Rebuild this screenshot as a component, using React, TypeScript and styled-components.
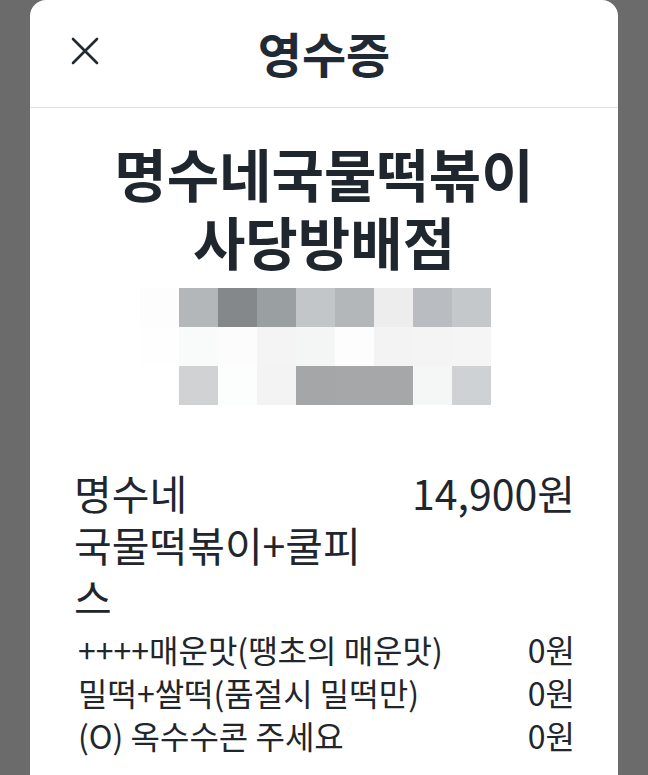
import React from "react";
import styled, { createGlobalStyle } from "styled-components";

const GlobalStyle = createGlobalStyle`
  html, body {
    margin: 0;
    padding: 0;
    background: #6b6b6b;
  }
  body {
    font-family: "Noto Sans CJK KR", "Noto Sans", sans-serif;
    color: #1f262d;
  }
`;

const Page = styled.div`
  display: flex;
  justify-content: center;
  min-height: 775px;
`;

const Card = styled.div`
  width: 588px;
  min-height: 775px;
  background: #ffffff;
  border-radius: 16px 16px 0 0;
  overflow: hidden;
`;

const Header = styled.div`
  display: grid;
  grid-template-columns: 1fr auto 1fr;
  align-items: center;
  height: 108px;
  border-bottom: 1px solid #e2e2e2;
  box-sizing: border-box;
`;

const CloseButton = styled.button`
  justify-self: start;
  margin-left: 40px;
  margin-top: -6px;
  padding: 0;
  border: none;
  background: none;
  display: flex;
  cursor: pointer;
`;

const Title = styled.h1`
  margin: -4px 0 0;
  font-size: 48px;
  font-weight: 700;
  line-height: 1;
  color: #1f2a35;
`;

const StoreName = styled.h2`
  margin: 30px 0 0;
  text-align: center;
  font-size: 57px;
  font-weight: 700;
  line-height: 68px;
  color: #1f262d;
`;

const StoreLine = styled.span`
  display: block;
  height: 68px;
`;

const Mosaic = styled.div`
  display: grid;
  grid-template-columns: repeat(9, 39px);
  grid-auto-rows: 39px;
  margin: 14px 0 0 110px;
`;

const Cell = styled.div<{ $color: string }>`
  background: ${(p) => p.$color};
`;

const Items = styled.div`
  padding: 61px 43px 0 44px;
`;

const ItemRow = styled.div`
  display: flex;
  justify-content: space-between;
  align-items: flex-start;
`;

const ItemName = styled.div`
  width: 320px;
  font-size: 41px;
  line-height: 52px;
  word-break: keep-all;
  overflow-wrap: anywhere;
`;

const ItemPrice = styled.div`
  font-size: 41px;
  line-height: 52px;
  white-space: nowrap;
`;

const Options = styled.div`
  margin-top: 6px;
  padding-left: 4px;
`;

const OptionRow = styled.div`
  display: flex;
  justify-content: space-between;
  font-size: 32px;
  line-height: 43px;
`;

const mosaic = [
  ["#fdfdfd", "#b3b7b9", "#85888b", "#9a9fa2", "#c3c6c8", "#b3b7b9", "#ededed", "#b9bcc0", "#c5c8ca"],
  ["#fefefe", "#f9fafa", "#fcfcfc", "#f4f4f4", "#f4f5f5", "#fdfdfd", "#f3f3f3", "#f4f4f4", "#f5f5f5"],
  ["#ffffff", "#d1d2d3", "#fcfdfd", "#f3f3f3", "#a5a6a7", "#a6a7a8", "#a6a7a8", "#f5f6f6", "#cfd2d5"],
];

const options = [
  { name: "++++매운맛(땡초의 매운맛)", price: "0원" },
  { name: "밀떡+쌀떡(품절시 밀떡만)", price: "0원" },
  { name: "(O) 옥수수콘 주세요", price: "0원" },
];

const CloseIcon = () => (
  <svg width="30" height="28" viewBox="0 0 30 28" fill="none">
    <path d="M3 2 L27 26 M27 2 L3 26" stroke="#222a30" strokeWidth="2.6" strokeLinecap="round" />
  </svg>
);

export default function App() {
  return (
    <>
      <GlobalStyle />
      <Page>
        <Card>
          <Header>
            <CloseButton aria-label="닫기">
              <CloseIcon />
            </CloseButton>
            <Title>영수증</Title>
            <span />
          </Header>
          <StoreName>
            <StoreLine>명수네국물떡볶이</StoreLine>
            <StoreLine>사당방배점</StoreLine>
          </StoreName>
          <Mosaic>
            {mosaic.flat().map((c, i) => (
              <Cell key={i} $color={c} />
            ))}
          </Mosaic>
          <Items>
            <ItemRow>
              <ItemName>{"명수네 국물떡볶이\u2060+\u2060쿨피스"}</ItemName>
              <ItemPrice>14,900원</ItemPrice>
            </ItemRow>
            <Options>
              {options.map((o) => (
                <OptionRow key={o.name}>
                  <span>{o.name}</span>
                  <span>{o.price}</span>
                </OptionRow>
              ))}
            </Options>
          </Items>
        </Card>
      </Page>
    </>
  );
}
